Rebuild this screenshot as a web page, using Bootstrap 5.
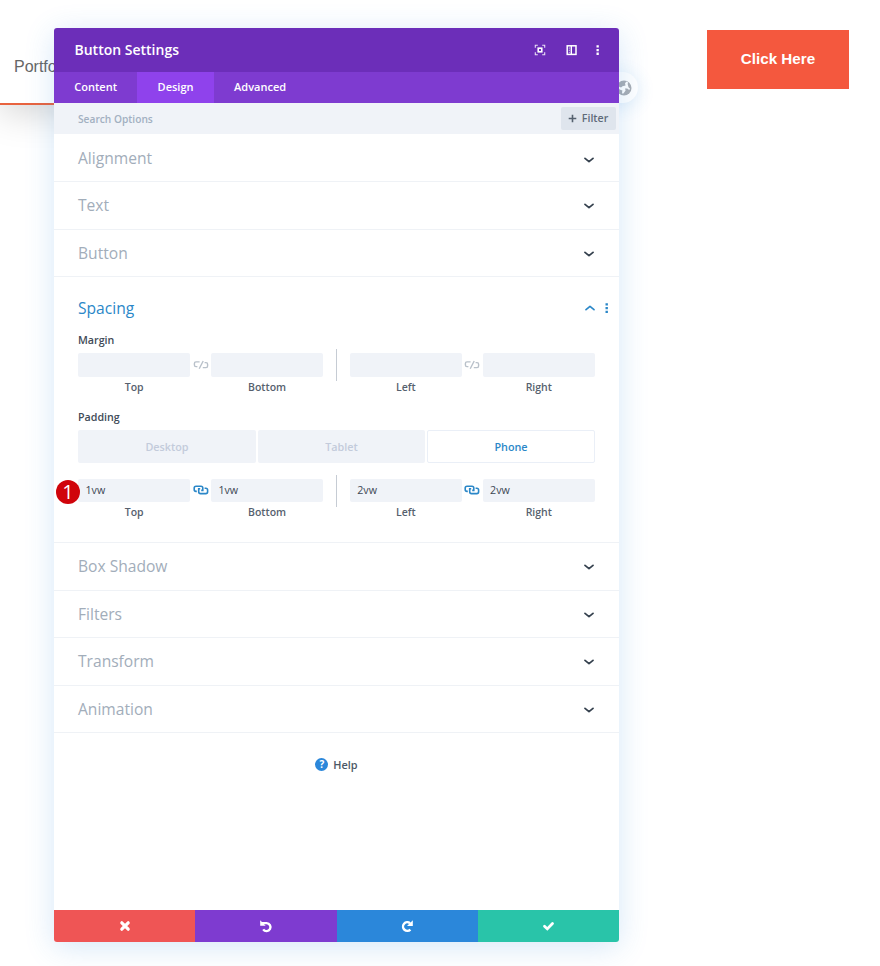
<!DOCTYPE html>
<html lang="en">
<head>
<meta charset="utf-8">
<meta name="viewport" content="width=device-width, initial-scale=1">
<title>Button Settings</title>
<link href="https://cdn.jsdelivr.net/npm/bootstrap@5.3.0/dist/css/bootstrap.min.css" rel="stylesheet">
<style>
body{font-family:"Open Sans",sans-serif;font-size:11px;line-height:16px;color:#4c5866;background:#fff}
svg{display:block;flex:none}
.stage{height:966px;padding:28px 0 0 54px}
.site-nav{left:0;top:28px;width:560px;height:77px;border-bottom:2px solid #e8633f;box-shadow:0 8px 36px rgba(0,0,0,.17);padding:2px 0 0 14px;font:16px "Liberation Sans",Arial,sans-serif;color:#666;background:#fff}
.site-mask{left:0;top:0;width:100%;height:28px;background:#fff}
.bubble{left:594px;top:72px;width:44px;height:31px;border-radius:16px;background:#fff;box-shadow:0 3px 18px rgba(43,135,218,.16);padding-right:6px}
.panel{width:565px;height:913.5px;border-radius:3px;box-shadow:0 5px 30px rgba(43,135,218,.2);z-index:2}
.panel-head{height:44px;border-radius:3px 3px 0 0;background:#6c2eb9;padding:0 15px 0 20.5px;font-size:14px;font-weight:600;color:#fff}
.panel-tabs{height:31px;background:#7e3bd0}
.panel-tabs .btn{border:0;border-radius:0;padding:0 20.3px 2px;font-size:11px;font-weight:600;color:#fff;line-height:29px}
.panel-tabs .btn.active{background:#8f42ec;color:#fff}
.search{height:31.4px;background:#f0f3f8;padding:0 3.5px 0 24px;font-size:10.2px;font-weight:600;color:#a2b0c1}
.filter{width:55px;height:23px;border:0;border-radius:2px;background:#dfe5ed;color:#5e6a78;font-size:10.6px;font-weight:600;padding:0;line-height:23px}
.toggle{height:47.6px;border-bottom:1px solid #eff2f6;padding:0 24px;font-size:15.6px;color:#a2adba}
.toggle svg{margin-top:2px}
.open-group{height:265.8px;border-bottom:1px solid #eff2f6;padding:19px 24px 0}
.group-title{height:23px;font-size:15.6px;color:#2b87c8;margin-right:-15px}
.lbl{color:#414b57;font-weight:600;font-size:10.7px}
.cell{width:112.5px}
.field{height:23.5px;border:0;border-radius:2px;background:#f0f3f8;padding:0 7.5px;font-size:10.7px;font-weight:400;color:#3d4855;font-family:inherit}
.field:focus{background:#f0f3f8;box-shadow:none}
.capt{font-size:10.5px;font-weight:600;margin-top:2px;color:#56616e}
.link-ico{width:20.5px;height:23px}
.rule{width:26.5px;height:32px;margin-top:-4px}
.rule span{width:1.5px;background:#c6ccd4}
.device{height:33px;border-radius:2px;background:#f0f3f8;color:#c3cbdb;font-size:10.8px;font-weight:600;padding-top:1px}
.device.current{background:#fff;border:1px solid #eaeff7;color:#2b87c8}
.margin-label{padding:5px 0 1px}
.padding-label{margin:14.5px 0 4.5px}
.padding-row{margin-top:16px}
.step{left:2px;top:452px;width:24px;height:24px;background:#d0040b;color:#fff;font:400 20px/24px "Open Sans",sans-serif}
.help{margin-top:23.5px;font-size:10.9px;font-weight:600}
.help-dot{width:13px;height:13px;margin-right:5px;background:#2b87da;color:#fff;font-size:10px;font-weight:700;line-height:13px}
.panel-foot{height:31.5px;border-radius:0 0 3px 3px}
.panel-foot .btn{width:25%;border:0;border-radius:0;padding:0;color:#fff}
.f1{background:#ef5555}.f2{background:#7e3bd0}.f3{background:#2b87da}.f4{background:#29c4a9}
.cta{width:142px;height:59px;margin:2px 0 0 88px;border:0;border-radius:0;background:#f4583e;color:#fff;font:bold 15.2px "Liberation Sans",Arial,sans-serif;padding:0 0 2px}
.cta:hover{background:#f4583e;color:#fff}
</style>
<script src="https://cdn.jsdelivr.net/npm/bootstrap@5.3.0/dist/js/bootstrap.bundle.min.js"></script>
</head>
<body>
<svg class="d-none">
 <symbol id="down" viewBox="0 0 12 8"><path d="M2 2.4L6 5.6L10 2.4" fill="none" stroke="#35414e" stroke-width="1.8" stroke-linecap="round" stroke-linejoin="round"/></symbol>
 <symbol id="linked" viewBox="0 0 16 10"><path d="M3.8 6.4H3Q1.2 6.4 1.2 4.6V3Q1.2 1.2 3 1.2H8Q9.8 1.2 9.8 3V5.4H8.2M11.6 3.2H12.8Q14.6 3.2 14.6 5V6.8Q14.6 8.6 12.8 8.6H7.5Q5.7 8.6 5.7 6.8V3.8H7.2" fill="none" stroke="#2b87c8" stroke-width="1.6"/></symbol>
 <symbol id="unlinked" viewBox="0 0 16 10"><path d="M6.6 1.9H3Q1.4 1.9 1.4 3.5V5Q1.4 6.6 3 6.6H4.4M10.2 1L6.2 8.8M11.6 2.6H13Q14.6 2.6 14.6 4.2V6Q14.6 7.6 13 7.6H9.8" fill="none" stroke="#b9c1ca" stroke-width="1.4"/></symbol>
</svg>
<main class="stage position-relative d-flex align-items-start overflow-hidden">
 <div class="site-nav position-absolute d-flex align-items-center">Portfolio</div>
 <div class="site-mask position-absolute"></div>
 <div class="bubble position-absolute d-flex align-items-center justify-content-end">
  <svg width="16" height="16" viewBox="0 0 16 16"><circle cx="8" cy="8" r="7.5" fill="#a9adb3"/><path d="M1.5 6L5 7.5 6.5 6.3 9.5 5.5 9 3.3 10.5 1.4l1.5.8-.3 2 .8 3 1.6 1.5-.9 1.3-2-1.6L9 8.6l.6 1.8L8 12.7 6.8 14 6 12.6 6.4 10.6 3.6 9.4z" fill="#fff"/></svg>
 </div>
 <section class="panel position-relative d-flex flex-column flex-shrink-0 bg-white">
  <div class="panel-head d-flex align-items-center">
   <span class="me-auto">Button Settings</span>
   <svg class="me-3" width="12" height="12" viewBox="0 0 12 12" fill="none" stroke="#fff"><path d="M1.3 3.8V1.3H3.8M8.2 1.3h2.5v2.5M10.7 8.2v2.5H8.2M3.8 10.7H1.3V8.2" stroke-width="1.1" opacity=".85"/><rect x="4.2" y="4.2" width="3.6" height="3.6" stroke-width="1.6"/></svg>
   <svg class="ms-1 me-3" width="12" height="12" viewBox="0 0 12 12" fill="none" stroke="#fff"><rect x="1.2" y="1.8" width="8.8" height="8.6" stroke-width="1.5"/><path d="M5.3 2v8" stroke-width="1.4"/><path d="M3.3 3.5v5.4" stroke-width="1" stroke-dasharray="1.2 1" opacity=".8"/></svg>
   <svg width="10" height="12" viewBox="0 0 10 12" fill="#fff"><path d="M2.5 1.2h2.3v2.4H2.5zM2.5 4.9h2.3v2.4H2.5zM2.5 8.6h2.3V11H2.5z"/></svg>
  </div>
  <nav class="panel-tabs d-flex">
   <button class="btn">Content</button><button class="btn active">Design</button><button class="btn">Advanced</button>
  </nav>
  <div class="search d-flex align-items-center justify-content-between">
   <span>Search Options</span>
   <button class="btn filter d-flex align-items-center justify-content-center"><svg class="me-1" width="10" height="9" viewBox="0 0 10 9"><path d="M4.5.7v7.6M.7 4.5h7.6" stroke="#55616f" stroke-width="1.6"/></svg>Filter</button>
  </div>
  <div class="toggle d-flex align-items-center justify-content-between"><span>Alignment</span><svg class="mt-1" width="12" height="8"><use href="#down"/></svg></div>
  <div class="toggle d-flex align-items-center justify-content-between"><span>Text</span><svg width="12" height="8"><use href="#down"/></svg></div>
  <div class="toggle d-flex align-items-center justify-content-between"><span>Button</span><svg width="12" height="8"><use href="#down"/></svg></div>
  <div class="open-group">
   <div class="group-title d-flex align-items-center">
    <span class="me-auto">Spacing</span>
    <svg width="12" height="8" viewBox="0 0 12 8"><path d="M2 5.6L6 2.4L10 5.6" fill="none" stroke="#2b87c8" stroke-width="1.7" stroke-linecap="round" stroke-linejoin="round"/></svg>
    <svg class="ms-2" width="6" height="12" viewBox="0 0 6 12" fill="#2b87c8"><path d="M1.5 1.3h2.4v2.2H1.5zM1.5 5h2.4v2.2H1.5zM1.5 8.7h2.4v2.2H1.5z"/></svg>
   </div>
   <div class="lbl margin-label mt-2 mb-1">Margin</div>
   <div class="d-flex text-center">
    <div class="cell"><input class="form-control field" aria-label="Margin top"><div class="capt">Top</div></div>
    <div class="link-ico d-flex align-items-center justify-content-center"><svg width="16" height="10"><use href="#unlinked"/></svg></div>
    <div class="cell"><input class="form-control field" aria-label="Margin bottom"><div class="capt">Bottom</div></div>
    <div class="rule d-flex justify-content-center"><span></span></div>
    <div class="cell"><input class="form-control field" aria-label="Margin left"><div class="capt">Left</div></div>
    <div class="link-ico d-flex align-items-center justify-content-center"><svg width="16" height="10"><use href="#unlinked"/></svg></div>
    <div class="cell"><input class="form-control field" aria-label="Margin right"><div class="capt">Right</div></div>
   </div>
   <div class="lbl padding-label">Padding</div>
   <div class="d-grid" style="grid-template-columns:178px 167px 168px;column-gap:2px">
    <div class="device d-flex align-items-center justify-content-center">Desktop</div>
    <div class="device d-flex align-items-center justify-content-center">Tablet</div>
    <div class="device current d-flex align-items-center justify-content-center">Phone</div>
   </div>
   <div class="padding-row d-flex text-center">
    <div class="cell"><input class="form-control field" aria-label="Padding top" value="1vw"><div class="capt">Top</div></div>
    <div class="link-ico d-flex align-items-center justify-content-center"><svg width="16" height="10"><use href="#linked"/></svg></div>
    <div class="cell"><input class="form-control field" aria-label="Padding bottom" value="1vw"><div class="capt">Bottom</div></div>
    <div class="rule d-flex justify-content-center"><span></span></div>
    <div class="cell"><input class="form-control field" aria-label="Padding left" value="2vw"><div class="capt">Left</div></div>
    <div class="link-ico d-flex align-items-center justify-content-center"><svg width="16" height="10"><use href="#linked"/></svg></div>
    <div class="cell"><input class="form-control field" aria-label="Padding right" value="2vw"><div class="capt">Right</div></div>
   </div>
  </div>
  <div class="toggle d-flex align-items-center justify-content-between"><span>Box Shadow</span><svg width="12" height="8"><use href="#down"/></svg></div>
  <div class="toggle d-flex align-items-center justify-content-between"><span>Filters</span><svg width="12" height="8"><use href="#down"/></svg></div>
  <div class="toggle d-flex align-items-center justify-content-between"><span>Transform</span><svg width="12" height="8"><use href="#down"/></svg></div>
  <div class="toggle d-flex align-items-center justify-content-between"><span>Animation</span><svg width="12" height="8"><use href="#down"/></svg></div>
  <div class="help d-flex align-items-center justify-content-center"><span class="help-dot rounded-circle text-center">?</span>Help</div>
  <div class="panel-foot d-flex mt-auto overflow-hidden">
   <button class="btn f1 d-flex align-items-center justify-content-center" aria-label="Discard"><svg width="12" height="12" viewBox="0 0 12 12"><path d="M2.8 2.8l6.4 6.4M9.2 2.8L2.8 9.2" stroke="#fff" stroke-width="3.2" stroke-linecap="round"/></svg></button>
   <button class="btn f2 d-flex align-items-center justify-content-center" aria-label="Undo"><svg width="14" height="14" viewBox="0 0 14 14"><path d="M3 4.1H7.6A4 4 0 1 1 4.2 10.4" fill="none" stroke="#fff" stroke-width="2.4"/><path d="M1.2 1.3v5.5h5.5z" fill="#fff"/></svg></button>
   <button class="btn f3 d-flex align-items-center justify-content-center" aria-label="Redo"><svg width="14" height="14" viewBox="0 0 14 14"><path d="M10 4.2A4.3 4.3 0 1 0 10.4 10.6" fill="none" stroke="#fff" stroke-width="2.4"/><path d="M12.8 1.2v5.8H7z" fill="#fff"/></svg></button>
   <button class="btn f4 d-flex align-items-center justify-content-center" aria-label="Save"><svg width="13" height="12" viewBox="0 0 13 12"><path d="M2.5 6.2l2.8 2.7 5.2-5.3" fill="none" stroke="#fff" stroke-width="2.8" stroke-linecap="round"/></svg></button>
  </div>
  <span class="step position-absolute rounded-circle text-center">1</span>
 </section>
 <button class="btn cta">Click Here</button>
</main>
</body>
</html>
